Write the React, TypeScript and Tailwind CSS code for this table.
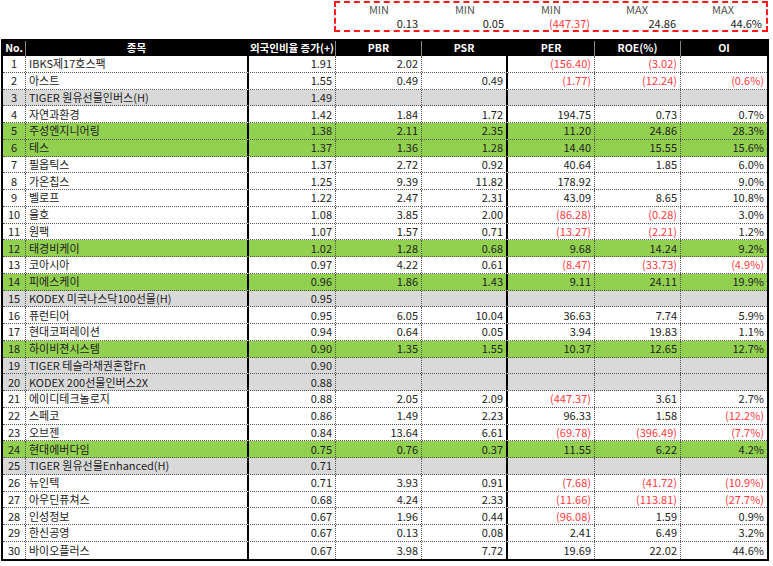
import React from "react";

type Row = [number, string, string, string, string, string, string, string, "w" | "g" | "s"];

const rows: Row[] = [
  [1, "IBKS제17호스팩", "1.91", "2.02", "", "(156.40)", "(3.02)", "", "w"],
  [2, "아스트", "1.55", "0.49", "0.49", "(1.77)", "(12.24)", "(0.6%)", "w"],
  [3, "TIGER 원유선물인버스(H)", "1.49", "", "", "", "", "", "s"],
  [4, "자연과환경", "1.42", "1.84", "1.72", "194.75", "0.73", "0.7%", "w"],
  [5, "주성엔지니어링", "1.38", "2.11", "2.35", "11.20", "24.86", "28.3%", "g"],
  [6, "테스", "1.37", "1.36", "1.28", "14.40", "15.55", "15.6%", "g"],
  [7, "필옵틱스", "1.37", "2.72", "0.92", "40.64", "1.85", "6.0%", "w"],
  [8, "가온칩스", "1.25", "9.39", "11.82", "178.92", "", "9.0%", "w"],
  [9, "벨로프", "1.22", "2.47", "2.31", "43.09", "8.65", "10.8%", "w"],
  [10, "율호", "1.08", "3.85", "2.00", "(86.28)", "(0.28)", "3.0%", "w"],
  [11, "원팩", "1.07", "1.57", "0.71", "(13.27)", "(2.21)", "1.2%", "w"],
  [12, "태경비케이", "1.02", "1.28", "0.68", "9.68", "14.24", "9.2%", "g"],
  [13, "코아시아", "0.97", "4.22", "0.61", "(8.47)", "(33.73)", "(4.9%)", "w"],
  [14, "피에스케이", "0.96", "1.86", "1.43", "9.11", "24.11", "19.9%", "g"],
  [15, "KODEX 미국나스닥100선물(H)", "0.95", "", "", "", "", "", "s"],
  [16, "퓨런티어", "0.95", "6.05", "10.04", "36.63", "7.74", "5.9%", "w"],
  [17, "현대코퍼레이션", "0.94", "0.64", "0.05", "3.94", "19.83", "1.1%", "w"],
  [18, "하이비젼시스템", "0.90", "1.35", "1.55", "10.37", "12.65", "12.7%", "g"],
  [19, "TIGER 테슬라채권혼합Fn", "0.90", "", "", "", "", "", "s"],
  [20, "KODEX 200선물인버스2X", "0.88", "", "", "", "", "", "s"],
  [21, "에이디테크놀로지", "0.88", "2.05", "2.09", "(447.37)", "3.61", "2.7%", "w"],
  [22, "스페코", "0.86", "1.49", "2.23", "96.33", "1.58", "(12.2%)", "w"],
  [23, "오브젠", "0.84", "13.64", "6.61", "(69.78)", "(396.49)", "(7.7%)", "w"],
  [24, "현대에버다임", "0.75", "0.76", "0.37", "11.55", "6.22", "4.2%", "g"],
  [25, "TIGER 원유선물Enhanced(H)", "0.71", "", "", "", "", "", "s"],
  [26, "뉴인텍", "0.71", "3.93", "0.91", "(7.68)", "(41.72)", "(10.9%)", "w"],
  [27, "아우딘퓨쳐스", "0.68", "4.24", "2.33", "(11.66)", "(113.81)", "(27.7%)", "w"],
  [28, "인성정보", "0.67", "1.96", "0.44", "(96.08)", "1.59", "0.9%", "w"],
  [29, "한신공영", "0.67", "0.13", "0.08", "2.41", "6.49", "3.2%", "w"],
  [30, "바이오플러스", "0.67", "3.98", "7.72", "19.69", "22.02", "44.6%", "w"],
];

const summary = [
  ["MIN", "0.13"],
  ["MIN", "0.05"],
  ["MIN", "(447.37)"],
  ["MAX", "24.86"],
  ["MAX", "44.6%"],
];

function Num({ v, cls }: { v: string; cls: string }) {
  const neg = v.startsWith("(");
  return (
    <div className={`${cls} h-full flex items-center justify-end pr-[3px] ${neg ? "text-[#ff3b3b]" : ""}`}>
      {v}
    </div>
  );
}

export default function App() {
  const dot = "border-r border-dotted border-r-[#555]";
  return (
    <div
      className="w-[773px] h-[566px] bg-white text-[#222] text-[11px] leading-none overflow-hidden"
      style={{ fontFamily: '"Noto Sans CJK KR", "Noto Sans", sans-serif' }}
    >
      {/* min / max summary */}
      <div className="ml-[334px] mt-[1px] w-[434px] h-[31px] border-2 border-dashed border-[#ff1a1a] flex">
        {summary.map(([label, val], i) => (
          <div key={i} className="w-[86px] flex flex-col">
            <div className="h-[13px] leading-[13px] text-center text-[#555]">{label}</div>
            <div
              className={`h-[14px] leading-[14px] text-right pr-[4px] ${val.startsWith("(") ? "text-[#ff3b3b]" : ""}`}
            >
              {val}
            </div>
          </div>
        ))}
      </div>

      {/* table */}
      <div className="ml-[1px] mt-[7px] w-[768px] border-2 border-black">
        <div className="h-[15px] bg-black text-white font-bold text-[10.5px] flex">
          <div className="w-[23px] flex items-center justify-center border-r border-[#888]">No.</div>
          <div className="w-[223px] flex items-center justify-center border-r-2 border-black">종목</div>
          <div className="w-[87px] flex items-center justify-center border-r border-[#888]">외국인비율 증가(+)</div>
          <div className="w-[86px] flex items-center justify-center border-r border-[#888]">PBR</div>
          <div className="w-[86px] flex items-center justify-center border-r-2 border-black">PSR</div>
          <div className="w-[87px] flex items-center justify-center border-r border-[#888]">PER</div>
          <div className="w-[86px] flex items-center justify-center border-r border-[#888]">ROE(%)</div>
          <div className="w-[86px] flex items-center justify-center">OI</div>
        </div>
        {rows.map((r) => {
          const bg = r[8] === "g" ? "bg-[#92d050]" : r[8] === "s" ? "bg-[#d9d9d9]" : "bg-white";
          return (
            <div
              key={r[0]}
              className={`h-[16.75px] flex ${bg} ${r[0] < 30 ? "border-b border-dotted border-b-[#555]" : ""}`}
            >
              <div className={`w-[23px] h-full flex items-center justify-center ${dot}`}>{r[0]}</div>
              <div className="w-[223px] h-full flex items-center pl-[3px] border-r-2 border-black whitespace-nowrap">
                {r[1]}
              </div>
              <Num v={r[2]} cls={`w-[87px] ${dot}`} />
              <Num v={r[3]} cls={`w-[86px] ${dot}`} />
              <Num v={r[4]} cls="w-[86px] border-r-2 border-black" />
              <Num v={r[5]} cls={`w-[87px] ${dot}`} />
              <Num v={r[6]} cls={`w-[86px] ${dot}`} />
              <Num v={r[7]} cls="w-[86px]" />
            </div>
          );
        })}
      </div>
    </div>
  );
}
